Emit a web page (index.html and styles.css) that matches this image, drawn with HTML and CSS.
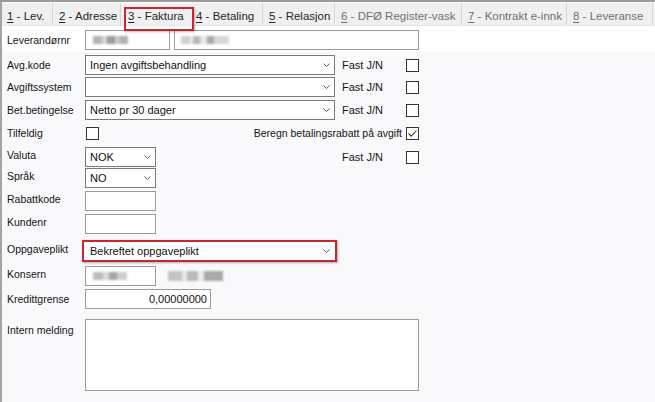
FILE: index.html
```html
<!DOCTYPE html>
<html lang="no">
<head>
<meta charset="utf-8">
<title>Faktura</title>
<link rel="stylesheet" href="styles.css">
</head>
<body>
<div class="win">
  <div class="tabs">
    <div class="tab t1"><u>1</u> - Lev.</div>
    <div class="tab t2"><u>2</u> - Adresse</div>
    <div class="tab t3 active"><u>3</u> - Faktura</div>
    <div class="tab t4"><u>4</u> - Betaling</div>
    <div class="tab t5"><u>5</u> - Relasjon</div>
    <div class="tab t6 off"><u>6</u> - DFØ Register-vask</div>
    <div class="tab t7 off"><u>7</u> - Kontrakt e-innk</div>
    <div class="tab t8 off"><u>8</u> - Leveranse</div>
  </div>

  <div class="head">
    <div class="row">
      <span class="lbl">Leverandørnr</span>
      <div class="levfields">
        <div class="box lev1"><span class="blur b1"></span></div>
        <div class="box lev2"><span class="blur b2"></span></div>
      </div>
    </div>
  </div>

  <div class="main">
    <div class="row mt3">
      <span class="lbl">Avg.kode</span>
      <div class="combo wide"><span class="val">Ingen avgiftsbehandling</span><svg class="chev" width="7" height="4" viewBox="0 0 7 4"><polyline points="0.5,0.5 3.5,3.5 6.5,0.5"/></svg></div>
      <span class="fast">Fast J/N</span>
      <span class="cb"></span>
    </div>
    <div class="row mt2">
      <span class="lbl">Avgiftssystem</span>
      <div class="combo wide"><span class="val"></span><svg class="chev" width="7" height="4" viewBox="0 0 7 4"><polyline points="0.5,0.5 3.5,3.5 6.5,0.5"/></svg></div>
      <span class="fast">Fast J/N</span>
      <span class="cb"></span>
    </div>
    <div class="row mt3">
      <span class="lbl">Bet.betingelse</span>
      <div class="combo wide"><span class="val">Netto pr 30 dager</span><svg class="chev" width="7" height="4" viewBox="0 0 7 4"><polyline points="0.5,0.5 3.5,3.5 6.5,0.5"/></svg></div>
      <span class="fast">Fast J/N</span>
      <span class="cb"></span>
    </div>
    <div class="row tall mt2">
      <span class="lbl">Tilfeldig</span>
      <span class="cb tilf"></span>
      <span class="beregn">Beregn betalingsrabatt på avgift</span>
      <span class="cb checked"><svg width="11" height="11" viewBox="0 0 11 11"><polyline points="1.5,5.5 4.2,8.2 9.5,2.5"/></svg></span>
    </div>
    <div class="row mt2">
      <span class="lbl up">Valuta</span>
      <div class="combo narrow"><span class="val">NOK</span><svg class="chev" width="7" height="4" viewBox="0 0 7 4"><polyline points="0.5,0.5 3.5,3.5 6.5,0.5"/></svg></div>
      <span class="fast">Fast J/N</span>
      <span class="cb"></span>
    </div>
    <div class="row mt1">
      <span class="lbl up">Språk</span>
      <div class="combo narrow"><span class="val">NO</span><svg class="chev" width="7" height="4" viewBox="0 0 7 4"><polyline points="0.5,0.5 3.5,3.5 6.5,0.5"/></svg></div>
    </div>
    <div class="row mt3">
      <span class="lbl up">Rabattkode</span>
      <div class="box short"></div>
    </div>
    <div class="row mt3">
      <span class="lbl up">Kundenr</span>
      <div class="box short"></div>
    </div>
    <div class="row flagrow mt6">
      <span class="lbl up">Oppgaveplikt</span>
      <div class="combo flag"><span class="val">Bekreftet oppgaveplikt</span><svg class="chev" width="7" height="4" viewBox="0 0 7 4"><polyline points="0.5,0.5 3.5,3.5 6.5,0.5"/></svg></div>
    </div>
    <div class="row mt4">
      <span class="lbl up">Konsern</span>
      <div class="konsern">
        <div class="box short"><span class="blur b3"></span></div>
        <span class="blur b4"></span>
      </div>
    </div>
    <div class="row mt3">
      <span class="lbl">Kredittgrense</span>
      <div class="box kreditt">0,00000000</div>
    </div>
    <div class="row memo mt10">
      <span class="lbl">Intern melding</span>
      <div class="box area"></div>
    </div>
  </div>
</div>
</body>
</html>
```

FILE: styles.css
```css
* { box-sizing: border-box; }

html, body {
  margin: 0;
  padding: 0;
}

body {
  width: 655px;
  height: 402px;
  overflow: hidden;
  background: #fafafc;
  font-family: "Liberation Sans", Arial, sans-serif;
  font-size: 11px;
  line-height: 13px;
  color: #111;
}

.win {
  height: 402px;
  border-left: 2px solid #a4a4a4;
  border-top: 2px solid #9a9a9a;
  background: #f9f9fb;
}

/* ---------- tabs ---------- */
.tabs {
  display: flex;
  height: 24px;
  background: #f0f0f0;
  border-top: 1px solid #fdfdfd;
  border-bottom: 1px solid #e6e6e6;
  font-size: 11.5px;
}

.tab {
  position: relative;
  height: 100%;
  padding: 7px 0 0 6px;
  border-right: 1px solid #d6d6d6;
  color: #262626;
  white-space: nowrap;
}

.tab u { text-decoration-thickness: 1px; text-underline-offset: 2px; }

.tab.off { color: #707070; }

.t1 { width: 51px; padding-left: 5px; }
.t2 { width: 68px; }
.t3 { width: 69px; padding-left: 7px; border-right-color: transparent; }
.t4 { width: 73px; padding-left: 6px; }
.t5 { width: 72px; }
.t6 { width: 127px; }
.t7 { width: 105px; }
.t8 { width: 86px; }

.t3::after {
  content: "";
  position: absolute;
  left: 3px;
  top: 4px;
  width: 66px;
  height: 20px;
  border: 2px solid #c6262e;
  box-shadow: 1px 1px 2px rgba(0, 0, 0, 0.25);
}

/* ---------- panels ---------- */
.head {
  background: #ffffff;
  padding: 4px 0 2px 5px;
}

.main {
  padding: 0 0 0 5px;
}

.row {
  display: grid;
  grid-template-columns: 78px 257px 64px 13px;
  align-items: center;
  height: 20px;
}

.row.tall { height: 23px; }
.row.flagrow { height: 22px; }
.row.memo { height: 72px; align-items: start; }

.mt1 { margin-top: 1px; }
.mt2 { margin-top: 2px; }
.mt3 { margin-top: 3px; }
.mt4 { margin-top: 4px; }
.mt6 { margin-top: 6px; }
.mt10 { margin-top: 10px; }

.lbl {
  grid-column: 1;
  grid-row: 1;
  color: #141414;
  font-size: 10.5px;
  white-space: nowrap;
}

.lbl.up { margin-top: -4px; }

.memo .lbl { padding-top: 5px; }

/* ---------- fields ---------- */
.box {
  height: 20px;
  border: 1px solid #9c9c9c;
  background: #fff;
  padding: 0 3px;
  display: flex;
  align-items: center;
}

.levfields {
  grid-column: 2 / 5;
  display: flex;
  gap: 4px;
}

.lev1 { width: 85px; }
.lev2 { flex: 1; }

.box.short { width: 71px; grid-column: 2; }

.box.kreditt {
  grid-column: 2;
  width: 126px;
  justify-content: flex-end;
  color: #111;
}

.box.area {
  grid-column: 2 / 5;
  height: 72px;
}

.konsern {
  grid-column: 2 / 5;
  display: flex;
  align-items: center;
  gap: 12px;
}

.combo {
  grid-column: 2;
  display: flex;
  align-items: center;
  height: 20px;
  border: 1px solid #7a7a7a;
  background: #fff;
  padding: 0 4px 0 4px;
}

.combo .val { flex: 1; white-space: nowrap; color: #111; }

.combo.wide { width: 250px; }
.combo.narrow { width: 71px; }

.combo.flag {
  width: 255px;
  height: 22px;
  margin-left: -3px;
  border: 2px solid #c6262e;
  padding: 0 5px 0 6px;
  box-shadow: 1px 1px 2px rgba(0, 0, 0, 0.3);
}

.chev { display: block; }
.chev polyline { fill: none; stroke: #5a5a5a; stroke-width: 1; }

.fast {
  grid-column: 3;
  grid-row: 1;
  color: #141414;
  font-size: 11px;
}

.cb {
  grid-column: 4;
  grid-row: 1;
  width: 13px;
  height: 13px;
  border: 1px solid #333;
  background: #fff;
  display: block;
}

.cb svg { display: block; }
.cb polyline { fill: none; stroke: #3a3a3a; stroke-width: 1.1; }

.cb.tilf {
  grid-column: 2;
  margin-left: 1px;
}

.beregn {
  grid-column: 2 / 4;
  grid-row: 1;
  justify-self: end;
  padding-right: 4px;
  color: #141414;
  font-size: 10.5px;
  white-space: nowrap;
}

/* ---------- masked values ---------- */
.blur {
  display: block;
  height: 8px;
  filter: blur(1px);
}

.b1 {
  width: 35px;
  margin-left: 4px;
  background: linear-gradient(90deg, #b4b4b4 0 25%, #d6d6d6 25% 40%, #9e9e9e 40% 62%, #c8c8c8 62% 78%, #b0b0b0 78% 100%);
}

.b2 {
  width: 48px;
  margin-left: 3px;
  background: linear-gradient(90deg, #cfcfcf 0 18%, #ececec 18% 26%, #b8b8b8 26% 40%, #e6e6e6 40% 55%, #a8a8a8 55% 68%, #d8d8d8 68% 100%);
}

.b3 {
  width: 34px;
  margin-left: 4px;
  background: linear-gradient(90deg, #bcbcbc 0 30%, #dadada 30% 48%, #a6a6a6 48% 70%, #cdcdcd 70% 100%);
}

.b4 {
  width: 55px;
  height: 10px;
  background: linear-gradient(90deg, #c4c4c4 0 25%, #e8e8e8 25% 35%, #bababa 35% 55%, #ececec 55% 65%, #a9a9a9 65% 100%);
}
```
